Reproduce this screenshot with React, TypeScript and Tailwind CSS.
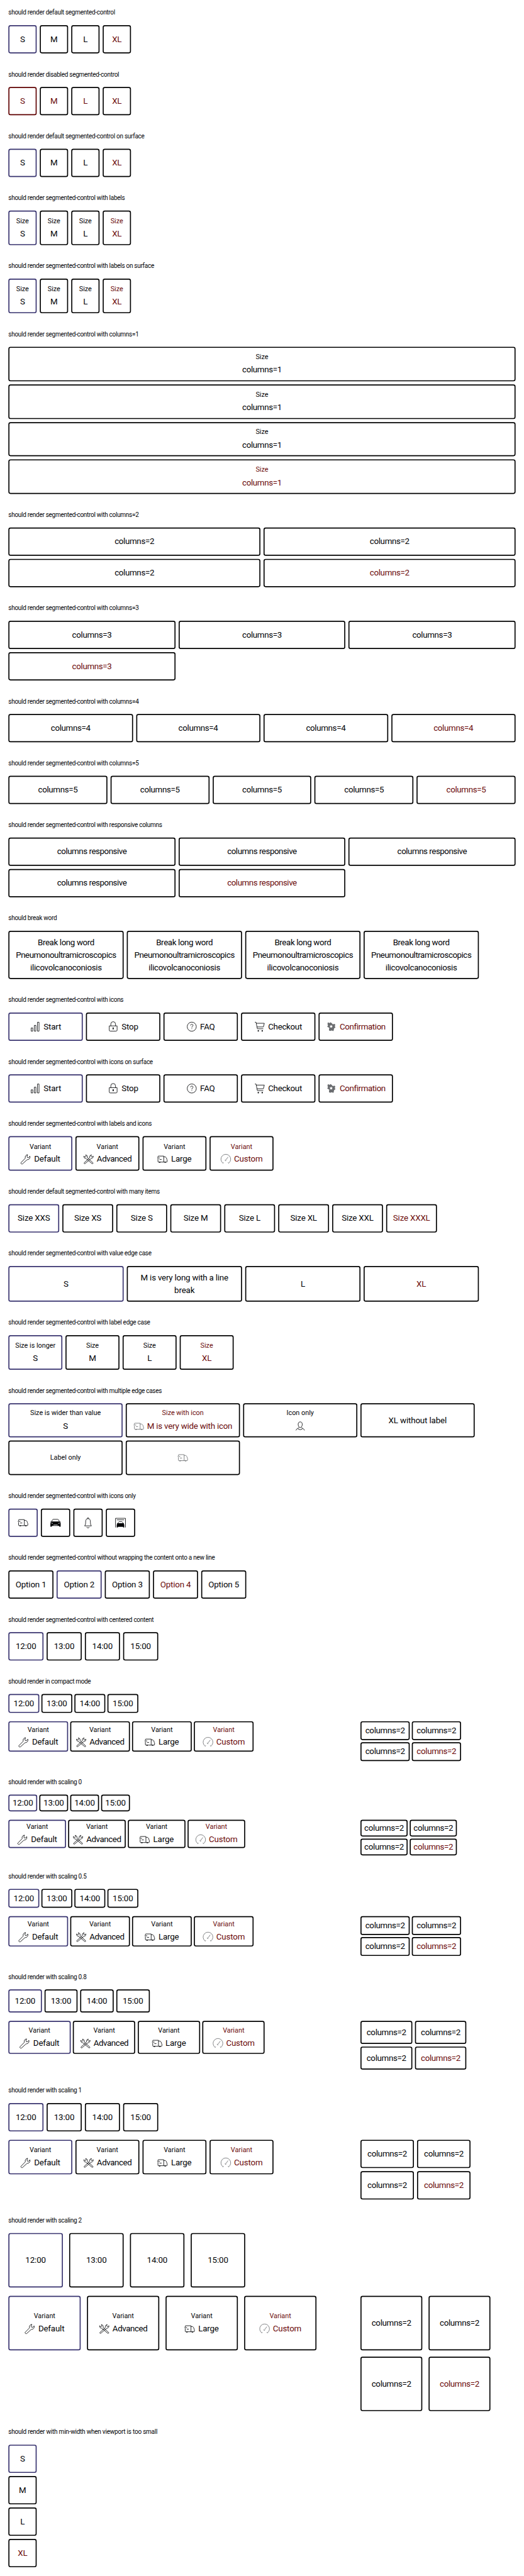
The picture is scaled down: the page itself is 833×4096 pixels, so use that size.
import type { ReactNode } from "react";

type IconName =
  | "chart"
  | "lock"
  | "question"
  | "cart"
  | "badge"
  | "wrench"
  | "wrenches"
  | "truck"
  | "gauge"
  | "user"
  | "car"
  | "bell"
  | "garage";

const ICONS: Record<IconName, ReactNode> = {
  chart: <path d="M4.500 14.500h3v6h-3zM10.500 9.500h3v11h-3zM16.500 3.500h3v17h-3z" />,
  lock: (
    <>
      <path d="M4.500 10.500h15v8a2 2 0 0 1-2 2h-11a2 2 0 0 1-2-2zM7.500 10.500V7a4.500 4.500 0 0 1 9 0v3.500" />
      <path d="M12 13.500v3.500" strokeWidth="2" />
    </>
  ),
  question: (
    <>
      <circle cx="12" cy="12" r="8.700" />
      <path d="M9.700 9.600c.1-1.400 1-2.200 2.400-2.200s2.300.8 2.300 2c0 1.900-2.300 2-2.300 4.200M12.100 15.200v1.300" />
    </>
  ),
  cart: (
    <>
      <path d="M2.500 3.500h2.200l2.500 12.500H18.500M5.100 5.500h15.400L18.700 12.500H6.500" />
      <circle cx="9" cy="20" r="1.300" fill="currentColor" stroke="none" />
      <circle cx="16.500" cy="20" r="1.300" fill="currentColor" stroke="none" />
    </>
  ),
  badge: (
    <path
      fill="currentColor"
      stroke="none"
      fillRule="evenodd"
      d="M6 3.500 8.800 5 11 3.500l2 1.500 2.200 2.500 3-1 1.800 1.500-1 3 1.300 2.500-2.500 1.500L16.500 20.500l-3.500-1.300-2.500 1-2.300-.7-.4-2.500.8-2.500L4.500 12l1.500-2.500L5 6.500zM12 8.300l-1 1.900-2.100.3 1.500 1.500-.3 2.100 1.900-1 1.900 1-.3-2.100 1.500-1.500-2.100-.3z"
    />
  ),
  wrench: (
    <path d="M3.800 20.800c-1-.6-1.200-1.500-.6-2.400L11.300 10.100c-.8-3.400.7-6.100 4.500-6.800l-1.300 3.500.9 2 2.200.1 2.500-2.700c.9 3.500-1 6.300-4.300 6.600-.7.1-1.300.3-1.900.9L6.400 20.500c-.7.9-1.700.9-2.600.3z" />
  ),
  wrenches: (
    <>
      <path d="M5.300 20.400c-1 .8-2.400-.5-1.600-1.600L14.200 9.300c-.7-2.600.4-5 3.300-5.600L16.600 6.300l1 1.300 1.600.1 1.600-1.900c.5 2.800-1 4.800-3.800 4.900z" />
      <path d="M18.700 20.400c1 .8 2.400-.5 1.600-1.600L9.800 9.300c.7-2.600-.4-5-3.300-5.600l.9 2.600-1 1.300-1.600.1-1.600-1.900c-.5 2.800 1 4.800 3.800 4.900z" />
    </>
  ),
  truck: (
    <>
      <path d="M3.500 8.500V7a1 1 0 0 1 1-1h10v11.500M14.500 7.500h2c2.500 0 3.500 2.500 4 5l.5.7v3.300a1 1 0 0 1-1 1H4.500a1 1 0 0 1-1-1V11M2 9.500h5M6.500 12.500h4" />
      <path d="M5.500 18h2.500M16 18h2.500" strokeWidth="1.500" />
    </>
  ),
  gauge: (
    <path d="M6.300 20.300l1.400-2.200M17.700 20.300l-1.400-2.200M6.300 19.300a9.300 9.300 0 1 1 11.400 0M12.500 13l3.800-5.300M11.700 13a1 1 0 1 0 .9 1" />
  ),
  user: (
    <path d="M12 3.500c2.700 0 3.900 2 3.900 4.700 0 3.100-1.600 6-3.900 6s-3.900-2.900-3.900-6c0-2.700 1.200-4.700 3.900-4.700zM9.700 13.600c-.4 2.400-4.700 2-5.900 6.100M14.300 13.600c.4 2.400 4.700 2 5.900 6.100M7.500 16.700l4.500 1.800 4.500-1.800" />
  ),
  car: (
    <>
      <path
        fill="currentColor"
        stroke="none"
        d="M2 10.300c.5-.6 1.500-.8 2.600-.8h14.800c1.100 0 2.100.2 2.600.8l-1 1.200.8 1.800v6.200h-2.800V18H5v1.500H2.200v-6.200l.8-1.800z"
      />
      <path d="M4.800 9.800c.7-2.500 1.700-4.300 3-4.300h8.400c1.300 0 2.300 1.800 3 4.300" />
      <path d="M4 12.500l2.800 1M20 12.500l-2.800 1M8 16.300h8" className="stroke-white" />
    </>
  ),
  bell: (
    <>
      <path d="M12 4.300c-3.100 0-4.500 2.200-4.500 5.200 0 4.300-.3 6.500-2 8.500h13c-1.700-2-2-4.200-2-8.500 0-3-1.400-5.200-4.500-5.200z" />
      <path d="M10.400 4.500c0-1.300.6-2 1.600-2s1.600.7 1.600 2M9.500 20.300c.4 1 1.300 1.600 2.500 1.600s2.100-.6 2.500-1.600" />
    </>
  ),
  garage: (
    <>
      <path d="M2.500 21V3.500h19V21M5 6.500h14M7.300 13.500c.4-2 1.100-3.500 2.200-3.500h5c1.100 0 1.800 1.500 2.200 3.500" />
      <path
        fill="currentColor"
        stroke="none"
        d="M5.300 13h13.400l-.4 1.400.9 1.300V21h-2.200v-1.300H7V21H4.800v-5.300l.9-1.300z"
      />
    </>
  ),
};

function Icon({ name, muted }: { name: IconName; muted?: boolean }) {
  return (
    <svg
      viewBox="0 0 24 24"
      fill="none"
      stroke="currentColor"
      className={`size-6 shrink-0 ${muted ? "text-[#6b6d70]" : "text-[#010205]"}`}
    >
      {ICONS[name]}
    </svg>
  );
}

const TRACKING: Record<string, string> = {
  "12:00": "tracking-[-0.15px]",
  "13:00": "tracking-[-0.15px]",
  "14:00": "tracking-[-0.15px]",
  "15:00": "tracking-[-0.15px]",
  Default: "tracking-[-0.2px]",
  Advanced: "tracking-[-0.5px]",
  Checkout: "tracking-[-0.36px]",
  Confirmation: "tracking-[-0.46px]",
  "columns responsive": "tracking-[-0.55px]",
  "Break long word": "tracking-[-0.45px]",
  Pneumonoultramicroscopics: "tracking-[-0.55px]",
  ilicovolcanoconiosis: "tracking-[-0.4px]",
  "M is very wide with icon": "tracking-[-0.26px]",
  "M is very long with a line": "tracking-[-0.26px]",
  "XL without label": "tracking-[-0.17px]",
};

function trackingOf(text: string) {
  if (TRACKING[text]) return TRACKING[text];
  if (text.startsWith("columns=")) return "tracking-[-0.4px]";
  return "tracking-[-0.2px]";
}

type Item = {
  value?: string | string[];
  label?: string;
  icon?: IconName;
  selected?: boolean;
  disabled?: boolean;
  muted?: boolean;
};

function Segment({ value, label, icon, selected, disabled, muted }: Item) {
  const border = selected
    ? disabled
      ? "border-[#5f0000]"
      : "border-[#37326e]"
    : "border-black";
  const lines = value === undefined ? [] : Array.isArray(value) ? value : [value];
  return (
    <button
      type="button"
      className={`flex flex-col items-center justify-center rounded-[4px] border-2 ${border} ${disabled ? "text-[#6b0a0a]" : "text-[#010205]"}`}
    >
      {label && <span className="text-[13px] leading-5 whitespace-nowrap">{label}</span>}
      {(lines.length > 0 || icon) && (
        <span className={`flex items-center justify-center gap-1 ${label ? "mt-[2.3px]" : ""}`}>
          {icon && (
            <span className={lines.length > 0 ? "-ml-0.5" : ""}>
              <Icon name={icon} muted={muted ?? disabled} />
            </span>
          )}
          {lines.length > 0 && (
            <span className="flex flex-col text-base leading-6 whitespace-nowrap">
              {lines.map((line) => (
                <span key={line} className={trackingOf(line)}>
                  {line}
                </span>
              ))}
            </span>
          )}
        </span>
      )}
    </button>
  );
}

function Segments({ items, className }: { items: Item[]; className: string }) {
  return (
    <div className={`grid ${className}`}>
      {items.map((item, i) => (
        <Segment key={i} {...item} />
      ))}
    </div>
  );
}

function Section({
  title,
  tracking = "tracking-[-0.34px]",
  children,
}: {
  title: string;
  tracking?: string;
  children: ReactNode;
}) {
  return (
    <section className="mb-8">
      <h2 className={`mb-4 text-xs leading-4 whitespace-nowrap text-[#010205] ${tracking}`}>{title}</h2>
      {children}
    </section>
  );
}

const SIZES: Item[] = [
  { value: "S", selected: true },
  { value: "M" },
  { value: "L" },
  { value: "XL", disabled: true },
];
const SIZES_DISABLED: Item[] = SIZES.map((item) => ({ ...item, disabled: true }));
const SIZES_LABELED: Item[] = SIZES.map((item) => ({ ...item, label: "Size" }));
const repeat = (value: string, count: number, label?: string): Item[] =>
  Array.from({ length: count }, (_, i) => ({ value, label, disabled: i === count - 1 }));

const ICON_ITEMS: Item[] = [
  { value: "Start", icon: "chart", selected: true },
  { value: "Stop", icon: "lock" },
  { value: "FAQ", icon: "question" },
  { value: "Checkout", icon: "cart" },
  { value: "Confirmation", icon: "badge", disabled: true },
];
const VARIANTS: Item[] = [
  { label: "Variant", value: "Default", icon: "wrench", selected: true },
  { label: "Variant", value: "Advanced", icon: "wrenches" },
  { label: "Variant", value: "Large", icon: "truck" },
  { label: "Variant", value: "Custom", icon: "gauge", disabled: true },
];
const MANY: Item[] = [
  { value: "Size XXS", selected: true },
  { value: "Size XS" },
  { value: "Size S" },
  { value: "Size M" },
  { value: "Size L" },
  { value: "Size XL" },
  { value: "Size XXL" },
  { value: "Size XXXL", disabled: true },
];
const LONG_WORD: Item = {
  value: ["Break long word", "Pneumonoultramicroscopics", "ilicovolcanoconiosis"],
};
const TIMES: Item[] = [
  { value: "12:00", selected: true },
  { value: "13:00" },
  { value: "14:00" },
  { value: "15:00" },
];

const SCALES = [
  {
    title: "should render in compact mode",
    tracking: "tracking-[-0.41px]",
    times: "grid-cols-[repeat(4,59px)] auto-rows-[36px] gap-1",
    variants: "grid-cols-[repeat(4,114px)] auto-rows-[57.8px] gap-1",
    columns: "grid-cols-[repeat(2,94px)] auto-rows-[36px] gap-1",
  },
  {
    title: "should render with scaling 0",
    times: "grid-cols-[repeat(4,55px)] auto-rows-[32px] gap-1",
    variants: "grid-cols-[repeat(4,110px)] auto-rows-[53.8px] gap-1",
    columns: "grid-cols-[repeat(2,90px)] auto-rows-[32px] gap-1",
  },
  {
    title: "should render with scaling 0.5",
    times: "grid-cols-[repeat(4,59px)] auto-rows-[36px] gap-1",
    variants: "grid-cols-[repeat(4,114px)] auto-rows-[57.8px] gap-1",
    columns: "grid-cols-[repeat(2,94px)] auto-rows-[36px] gap-1",
  },
  {
    title: "should render with scaling 0.8",
    times: "grid-cols-[repeat(4,63.8px)] auto-rows-[44px] gap-[4.8px]",
    variants: "grid-cols-[repeat(4,118.7px)] auto-rows-[62.8px] gap-[4.8px]",
    columns: "grid-cols-[repeat(2,98.8px)] auto-rows-[44.1px] gap-[4.8px]",
  },
  {
    title: "should render with scaling 1",
    times: "grid-cols-[repeat(4,67px)] auto-rows-[54px] gap-1.5",
    variants: "grid-cols-[repeat(4,122px)] auto-rows-[65.8px] gap-1.5",
    columns: "grid-cols-[repeat(2,102px)] auto-rows-[54px] gap-1.5",
  },
  {
    title: "should render with scaling 2",
    times: "grid-cols-[repeat(4,104px)] auto-rows-[104px] gap-3",
    variants: "grid-cols-[repeat(4,138px)] auto-rows-[104px] gap-3",
    columns: "grid-cols-[repeat(2,118px)] auto-rows-[104px] gap-3",
  },
];

const QUAD = "grid-cols-[repeat(4,54px)] gap-1.5";

export default function App() {
  return (
    <div className="h-[4096px] w-[833px] overflow-hidden bg-white">
      <main className="h-[4918px] w-[1000px] origin-top-left scale-[0.8329] p-4 font-['Roboto',sans-serif]">
        <Section title="should render default segmented-control">
          <Segments items={SIZES} className={`auto-rows-[54px] ${QUAD}`} />
        </Section>
        <Section title="should render disabled segmented-control">
          <Segments items={SIZES_DISABLED} className={`auto-rows-[54px] ${QUAD}`} />
        </Section>
        <Section title="should render default segmented-control on surface">
          <Segments items={SIZES} className={`auto-rows-[54px] ${QUAD}`} />
        </Section>
        <Section title="should render segmented-control with labels">
          <Segments items={SIZES_LABELED} className={`auto-rows-[65.9px] ${QUAD}`} />
        </Section>
        <Section title="should render segmented-control with labels on surface">
          <Segments items={SIZES_LABELED} className={`auto-rows-[65.9px] ${QUAD}`} />
        </Section>
        <Section title="should render segmented-control with columns=1">
          <Segments items={repeat("columns=1", 4, "Size")} className="auto-rows-[65.9px] grid-cols-1 gap-1.5" />
        </Section>
        <Section title="should render segmented-control with columns=2">
          <Segments items={repeat("columns=2", 4)} className="auto-rows-[54px] grid-cols-2 gap-1.5" />
        </Section>
        <Section title="should render segmented-control with columns=3">
          <Segments items={repeat("columns=3", 4)} className="auto-rows-[54px] grid-cols-3 gap-1.5" />
        </Section>
        <Section title="should render segmented-control with columns=4">
          <Segments items={repeat("columns=4", 4)} className="auto-rows-[54px] grid-cols-4 gap-1.5" />
        </Section>
        <Section title="should render segmented-control with columns=5">
          <Segments items={repeat("columns=5", 5)} className="auto-rows-[54px] grid-cols-5 gap-1.5" />
        </Section>
        <Section title="should render segmented-control with responsive columns">
          <Segments items={repeat("columns responsive", 5)} className="auto-rows-[54px] grid-cols-3 gap-1.5" />
        </Section>
        <Section title="should break word">
          <Segments
            items={[LONG_WORD, LONG_WORD, LONG_WORD, LONG_WORD]}
            className="auto-rows-[91.8px] grid-cols-[repeat(4,220px)] gap-1.5"
          />
        </Section>
        <Section title="should render segmented-control with icons">
          <Segments items={ICON_ITEMS} className="auto-rows-[54px] grid-cols-[repeat(5,142px)] gap-1.5" />
        </Section>
        <Section title="should render segmented-control with icons on surface">
          <Segments items={ICON_ITEMS} className="auto-rows-[54px] grid-cols-[repeat(5,142px)] gap-1.5" />
        </Section>
        <Section title="should render segmented-control with labels and icons">
          <Segments items={VARIANTS} className="auto-rows-[65.9px] grid-cols-[repeat(4,122px)] gap-1.5" />
        </Section>
        <Section title="should render default segmented-control with many items">
          <Segments items={MANY} className="auto-rows-[54px] grid-cols-[repeat(8,97px)] gap-1.5" />
        </Section>
        <Section title="should render segmented-control with value edge case">
          <Segments
            items={[
              { value: "S", selected: true },
              { value: ["M is very long with a line", "break"] },
              { value: "L" },
              { value: "XL", disabled: true },
            ]}
            className="auto-rows-[67.9px] grid-cols-[repeat(4,220px)] gap-1.5"
          />
        </Section>
        <Section title="should render segmented-control with label edge case">
          <Segments
            items={[{ ...SIZES_LABELED[0], label: "Size is longer" }, ...SIZES_LABELED.slice(1)]}
            className="auto-rows-[65.9px] grid-cols-[repeat(4,103px)] gap-1.5"
          />
        </Section>
        <Section title="should render segmented-control with multiple edge cases">
          <Segments
            items={[
              { label: "Size is wider than value", value: "S", selected: true },
              { label: "Size with icon", value: "M is very wide with icon", icon: "truck", disabled: true },
              { label: "Icon only", icon: "user" },
              { value: "XL without label" },
              { label: "Label only" },
              { icon: "truck", muted: true },
            ]}
            className="auto-rows-[65.6px] grid-cols-[repeat(4,218px)] gap-1.5"
          />
        </Section>
        <Section title="should render segmented-control with icons only">
          <Segments
            items={[{ icon: "truck", selected: true }, { icon: "car" }, { icon: "bell" }, { icon: "garage" }]}
            className="auto-rows-[54px] grid-cols-[repeat(4,56px)] gap-1.5"
          />
        </Section>
        <Section
          title="should render segmented-control without wrapping the content onto a new line"
          tracking="tracking-[-0.32px]"
        >
          <Segments
            items={[
              { value: "Option 1" },
              { value: "Option 2", selected: true },
              { value: "Option 3" },
              { value: "Option 4", disabled: true },
              { value: "Option 5" },
            ]}
            className="auto-rows-[54px] grid-cols-[repeat(5,86px)] gap-1.5"
          />
        </Section>
        <Section title="should render segmented-control with centered content">
          <Segments items={TIMES} className="auto-rows-[54px] grid-cols-[repeat(4,67px)] gap-1.5" />
        </Section>
        {SCALES.map(({ title, tracking, times, variants, columns }) => (
          <Section key={title} title={title} tracking={tracking}>
            <Segments items={TIMES} className={times} />
            <div className="mt-4 grid grid-cols-[672px_1fr] items-start">
              <Segments items={VARIANTS} className={variants} />
              <Segments items={repeat("columns=2", 4)} className={columns} />
            </div>
          </Section>
        ))}
        <Section title="should render with min-width when viewport is too small" tracking="tracking-[-0.27px]">
          <Segments items={SIZES} className="auto-rows-[54px] grid-cols-[54px] gap-1.5" />
        </Section>
      </main>
    </div>
  );
}
